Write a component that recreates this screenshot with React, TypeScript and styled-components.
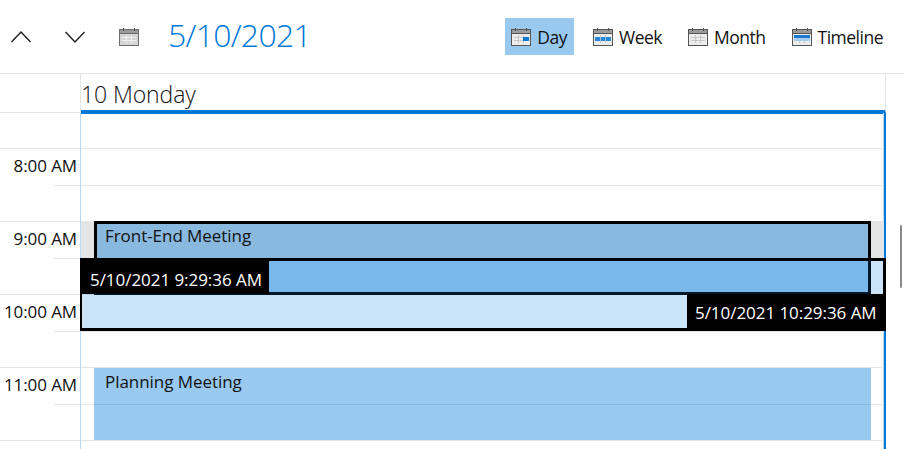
import styled, { createGlobalStyle } from 'styled-components';

type CalendarKind = 'plain' | 'day' | 'week' | 'month' | 'timeline';

const GlobalStyle = createGlobalStyle`
  html, body {
    margin: 0;
    padding: 0;
    background: #ffffff;
  }
  body {
    font-family: "Open Sans", "Noto Sans", "Liberation Sans", sans-serif;
    color: #000000;
  }
`;

const Page = styled.div`
  position: relative;
  width: 904px;
  height: 449px;
  overflow: hidden;
  background: #ffffff;
`;

const Toolbar = styled.header`
  display: flex;
  align-items: center;
  justify-content: space-between;
  height: 73px;
  border-bottom: 1px solid #e5e5e5;
  box-sizing: content-box;
`;

const DateNav = styled.div`
  display: flex;
  align-items: center;
  padding-left: 11px;
`;

const Chevron = styled.svg`
  display: block;
  width: 20px;
  height: 12px;
  margin-right: 34px;
  fill: none;
  stroke: #1f1f1f;
  stroke-width: 1.4;
`;

const DateTitle = styled.h1`
  margin: 0 0 3px 29px;
  font-size: 32px;
  font-weight: 300;
  letter-spacing: -0.75px;
  line-height: 40px;
  color: #0078d7;
`;

const ViewSwitcher = styled.nav`
  display: flex;
  align-items: center;
  gap: 13px;
  padding-right: 14px;
`;

const ViewButton = styled.div<{ $active?: boolean }>`
  display: flex;
  align-items: center;
  gap: 6px;
  height: 37px;
  padding: 0 7px 0 6px;
  font-size: 17.5px;
  letter-spacing: -0.5px;
  background: ${(p) => (p.$active ? '#99c9ef' : 'transparent')};
  color: #111111;
`;

const CalendarSvg = styled.svg`
  display: block;
  flex-shrink: 0;
  width: 20px;
  height: 18px;
`;

const Header = styled.div`
  display: grid;
  grid-template-columns: 81px 805px;
  height: 39px;
`;

const HeaderGutter = styled.div`
  border-bottom: 1px solid #e5e5e5;
  border-right: 1px solid #e5e5e5;
  box-sizing: content-box;
  height: 38px;
  width: 80px;
`;

const HeaderDay = styled.div`
  box-sizing: border-box;
  height: 40px;
  font-size: 23px;
  font-weight: 300;
  line-height: 41px;
  letter-spacing: -0.1px;
  color: #111111;
  border-right: 1px solid #e5e5e5;
  border-bottom: 4px solid #0078d7;
`;

const Body = styled.div`
  display: grid;
  grid-template-columns: 81px 805px;
`;

const Gutter = styled.div`
  display: grid;
  grid-template-rows: repeat(5, 36px 37px);
  border-right: 1px solid #b8d9f5;
  width: 80px;
  box-sizing: content-box;
`;

const GutterSlot = styled.div<{ $short?: boolean }>`
  position: relative;
  box-sizing: border-box;
  padding-right: 3px;
  text-align: right;
  font-size: 17px;
  letter-spacing: -0.1px;
  line-height: 34px;
  color: #111111;
  white-space: nowrap;

  &::after {
    content: '';
    position: absolute;
    right: 0;
    bottom: 0;
    left: ${(p) => (p.$short ? '54px' : '0')};
    height: 1px;
    background: #e5e5e5;
  }
`;

const DayColumn = styled.div`
  position: relative;
  display: grid;
  grid-template-rows: repeat(5, 36px 37px);
  box-sizing: border-box;
  width: 805px;
  border-right: 2px solid #0078d7;
  box-shadow: inset -1px 0 0 #b8d9f5;
`;

const DaySlot = styled.div`
  box-sizing: border-box;
  border-bottom: 1px solid #e5e5e5;
`;

// day column starts at y=113, x=81
const HoverSlot = styled.div`
  position: absolute;
  top: 109px;
  left: 0;
  right: 0;
  height: 36px;
  background: #e5e5e5;
`;

const Appointment = styled.div<{ $top: number; $height: number; $selected?: boolean }>`
  position: absolute;
  top: ${(p) => p.$top}px;
  left: 13px;
  width: 777px;
  height: ${(p) => p.$height}px;
  box-sizing: border-box;
  padding: ${(p) => (p.$selected ? '1px 0 0 8px' : '3px 0 0 11px')};
  border: ${(p) => (p.$selected ? '3px solid #000000' : 'none')};
  background: rgba(0, 120, 215, 0.4);
  font-size: 17px;
  letter-spacing: -0.05px;
  line-height: 22px;
  color: #111111;
`;

const SelectionBand = styled.div`
  position: absolute;
  top: 145px;
  left: -1px;
  width: 806px;
  height: 73px;
  box-sizing: border-box;
  border: 3px solid #000000;
  border-left-width: 2px;
  background: rgba(0, 120, 215, 0.2);
`;

const TimeTip = styled.div<{ $side: 'start' | 'end' }>`
  position: absolute;
  top: ${(p) => (p.$side === 'start' ? '145px' : '181px')};
  ${(p) => (p.$side === 'start' ? 'left: -1px;' : 'right: -2px;')}
  ${(p) => (p.$side === 'start' ? 'width: 189px;' : 'width: 199px;')}
  height: ${(p) => (p.$side === 'start' ? '36px' : '37px')};
  box-sizing: border-box;
  padding-left: ${(p) => (p.$side === 'start' ? '10px' : '8px')};
  background: #000000;
  color: #ffffff;
  font-size: 17px;
  letter-spacing: -0.05px;
  line-height: ${(p) => (p.$side === 'start' ? '44px' : '38px')};
  white-space: nowrap;
`;

const ScrollThumb = styled.div`
  position: absolute;
  top: 225px;
  right: 2px;
  width: 2px;
  height: 63px;
  border-radius: 1px;
  background: #8a8a8a;
`;

const slots = [
  { label: '' },
  { label: '8:00 AM', short: true },
  { label: '' },
  { label: '9:00 AM', short: true },
  { label: '' },
  { label: '10:00 AM', short: true },
  { label: '' },
  { label: '11:00 AM', short: true },
  { label: '' },
  { label: '' },
];

function CalendarIcon({ kind }: { kind: CalendarKind }) {
  const plain = kind === 'plain';
  return (
    <CalendarSvg viewBox="0 0 20 18">
      <rect x="0.5" y="1.5" width="19" height="16" fill={plain ? '#d6d6d6' : '#ececec'} stroke={plain ? '#6e6e6e' : '#555555'} />
      <rect x="1" y="2" width="18" height="3" fill="#9a9a9a" />
      <rect x="1" y="5" width="18" height="1" fill={plain ? '#6e6e6e' : '#555555'} />
      <rect x="4" y="0" width="1" height="3" fill="#555555" />
      <rect x="15" y="0" width="1" height="3" fill="#555555" />
      <path d="M3 9.5h14M3 12.5h14M7.5 7v8M12.5 7v8" stroke={plain ? '#efefef' : '#c8c8c8'} fill="none" />
      {kind === 'day' && <rect x="12" y="9" width="6" height="4" fill="#0f78d0" />}
      {kind === 'week' && (
        <>
          <rect x="2" y="9" width="16" height="4" fill="#2a86d6" />
          <path d="M7.5 9v4M12.5 9v4" stroke="#9cc8ee" fill="none" />
        </>
      )}
      {kind === 'timeline' && (
        <>
          <rect x="2" y="7" width="16" height="3" fill="#1a78cf" />
          <rect x="2" y="10" width="16" height="3" fill="#a9cdee" />
        </>
      )}
    </CalendarSvg>
  );
}

export default function App() {
  return (
    <Page>
      <GlobalStyle />
      <Toolbar>
        <DateNav>
          <Chevron viewBox="0 0 20 12">
            <polyline points="0.5,11 10,1 19.5,11" />
          </Chevron>
          <Chevron viewBox="0 0 20 12">
            <polyline points="0.5,1 10,11 19.5,1" />
          </Chevron>
          <CalendarIcon kind="plain" />
          <DateTitle>5/10/2021</DateTitle>
        </DateNav>
        <ViewSwitcher>
          <ViewButton $active>
            <CalendarIcon kind="day" />
            Day
          </ViewButton>
          <ViewButton>
            <CalendarIcon kind="week" />
            Week
          </ViewButton>
          <ViewButton>
            <CalendarIcon kind="month" />
            Month
          </ViewButton>
          <ViewButton>
            <CalendarIcon kind="timeline" />
            Timeline
          </ViewButton>
        </ViewSwitcher>
      </Toolbar>
      <Header>
        <HeaderGutter />
        <HeaderDay>10 Monday</HeaderDay>
      </Header>
      <Body>
        <Gutter>
          {slots.map((slot, i) => (
            <GutterSlot key={i} $short={!!slot.label}>
              {slot.label}
            </GutterSlot>
          ))}
        </Gutter>
        <DayColumn>
          {slots.map((_, i) => (
            <DaySlot key={i} />
          ))}
          <HoverSlot />
          <Appointment $top={108} $height={74} $selected>
            Front-End Meeting
          </Appointment>
          <Appointment $top={255} $height={72}>
            Planning Meeting
          </Appointment>
          <SelectionBand />
          <TimeTip $side="start">5/10/2021 9:29:36 AM</TimeTip>
          <TimeTip $side="end">5/10/2021 10:29:36 AM</TimeTip>
        </DayColumn>
      </Body>
      <ScrollThumb />
    </Page>
  );
}
